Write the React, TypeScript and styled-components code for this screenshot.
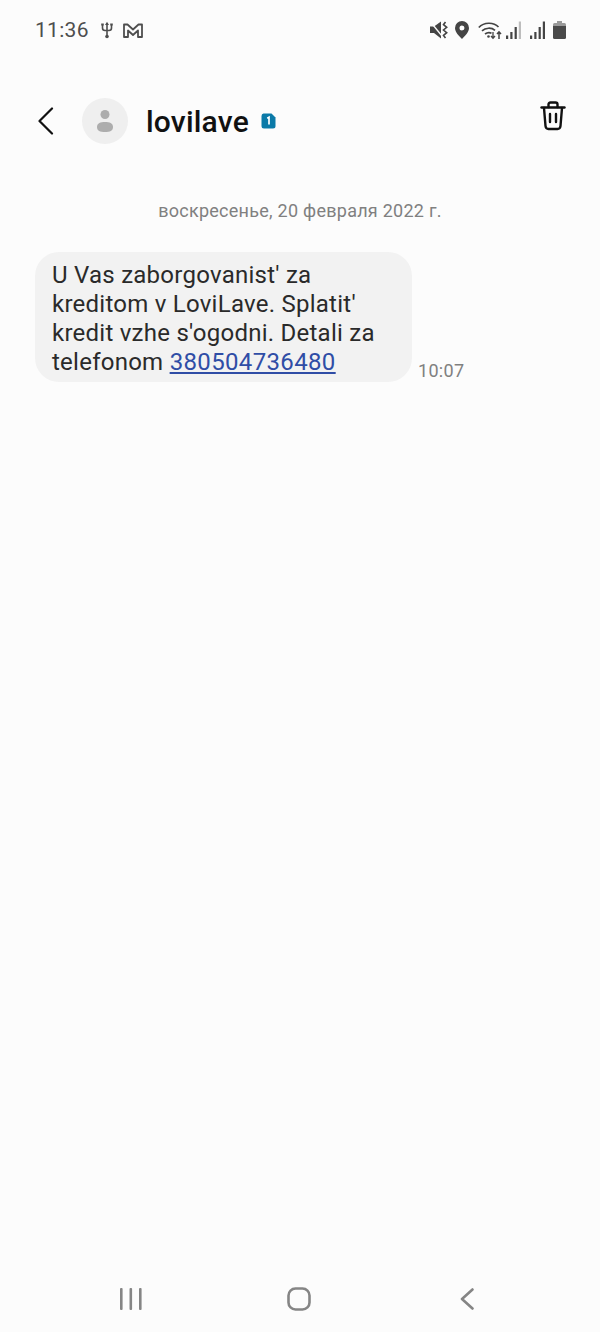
import React from 'react';
import styled, { createGlobalStyle } from 'styled-components';

const GlobalStyle = createGlobalStyle`
  html, body {
    margin: 0;
    padding: 0;
    background: #fcfcfc;
  }
  * {
    box-sizing: border-box;
  }
`;

const Screen = styled.div`
  width: 600px;
  height: 1332px;
  display: flex;
  flex-direction: column;
  background: #fcfcfc;
  font-family: Roboto, "Noto Sans", sans-serif;
  overflow: hidden;
`;

const StatusBar = styled.div`
  height: 60px;
  padding: 0 34px 0 35px;
  display: flex;
  align-items: center;
  justify-content: space-between;
  color: #4e4e4e;
`;

const StatusGroup = styled.div`
  display: flex;
  align-items: center;
`;

const StatusItem = styled.span<{ $left: number }>`
  display: flex;
  margin-left: ${(p) => p.$left}px;
`;

const Clock = styled.span`
  font-size: 21px;
  letter-spacing: 0.3px;
`;

const Header = styled.header`
  height: 80px;
  margin-top: 21px;
  padding: 0 36px;
  display: flex;
  align-items: center;
`;

const BackButton = styled.div`
  width: 46px;
  height: 46px;
  padding-left: 1px;
  display: flex;
  align-items: center;
`;

const Avatar = styled.div`
  width: 46px;
  height: 46px;
  border-radius: 50%;
  background: #efefef;
  display: flex;
  align-items: center;
  justify-content: center;
  margin-right: 18px;
`;

const Name = styled.h1`
  margin: 2px 12px 0 0;
  font-size: 30px;
  font-weight: 500;
  letter-spacing: 0.2px;
  color: #111;
  line-height: 46px;
`;

const TrashButton = styled.div`
  margin-left: auto;
  margin-right: -2px;
  margin-top: -10px;
  display: flex;
`;

const Thread = styled.main`
  flex: 1;
  padding: 0 35px;
  display: flex;
  flex-direction: column;
`;

const DateLabel = styled.div`
  margin-top: 39px;
  text-align: center;
  font-size: 18px;
  line-height: 22px;
  color: #808080;
  letter-spacing: 0.26px;
`;

const MessageRow = styled.div`
  margin-top: 30px;
  display: flex;
  align-items: flex-end;
  gap: 6px;
`;

const Bubble = styled.div`
  width: 377px;
  height: 130px;
  padding: 9px 17px 0;
  border-radius: 24px;
  background: #f2f2f2;
  color: #2a2a2a;
  font-size: 24px;
  line-height: 29px;
  letter-spacing: 0.25px;
`;

const PhoneLink = styled.a`
  color: #2f4da6;
  text-decoration: underline;
  letter-spacing: 0.35px;
`;

const Time = styled.span`
  font-size: 18px;
  line-height: 22px;
  color: #808080;
  letter-spacing: 0.3px;
`;

const NavBar = styled.nav`
  height: 66px;
  padding-right: 2px;
  display: grid;
  grid-template-columns: repeat(3, 168px);
  justify-content: center;
  align-items: center;
  justify-items: center;
`;

const NavSlot = styled.div`
  display: flex;
`;

const UsbIcon = () => (
  <svg width="14" height="18" viewBox="0 0 14 18" fill="none" stroke="#4e4e4e" strokeWidth="1.6">
    <path d="M7 2v13M2.500 4v3q0 2.500 2.500 2.500H9q2.500 0 2.500-2.500V4" />
    <circle cx="7" cy="15.500" r="1.800" fill="#4e4e4e" stroke="none" />
    <path d="M5 4L7 .8 9 4z" fill="#4e4e4e" stroke="none" />
    <path d="M1.200 3.500h2.600M10.200 3.500h2.600" strokeWidth="1.800" />
  </svg>
);

const MailIcon = () => (
  <svg width="20" height="15" viewBox="0 0 20 15" fill="none" stroke="#4e4e4e" strokeWidth="1.800" strokeLinejoin="round">
    <path d="M1 14V1.500h3.500L10 6.500l5.500-5H19V14h-4V7.500L10 12 5 7.500V14H1z" />
  </svg>
);

const MuteIcon = () => (
  <svg width="18" height="18" viewBox="0 0 18 18">
    <path d="M0 5.500h4L11 .5v17l-7-5.500H0z" fill="#444" />
    <path d="M1 1.500l11 13.500" stroke="#fcfcfc" strokeWidth="1.300" />
    <path d="M15.500 1l-2 2.700 3.200 2.600-3.200 2.700 3.200 2.700-3.200 2.700 2 2.600" stroke="#444" strokeWidth="1.600" fill="none" />
  </svg>
);

const PinIcon = () => (
  <svg width="14" height="18" viewBox="0 0 14 18">
    <path
      fillRule="evenodd"
      d="M7 0a7 7 0 0 1 7 7c0 4-4 8-7 11-3-3-7-7-7-11a7 7 0 0 1 7-7zm0 4.500a2.500 2.500 0 1 0 0 5 2.500 2.500 0 0 0 0-5z"
      fill="#444"
    />
  </svg>
);

const WifiIcon = () => (
  <svg width="24" height="19" viewBox="0 0 24 19" fill="none" stroke="#444" strokeWidth="1.700">
    <path d="M.8 6.500C6 1 15.500.8 20.500 6" />
    <path d="M4 9.800c3.500-3.200 9.500-3.500 13-.5" />
    <path d="M7 13c2-1.500 4.500-1.800 6.500-.8" />
    <circle cx="10.500" cy="15.500" r="1.300" fill="#444" stroke="none" />
    <path d="M15 11v6M13 15l2 2.200 2-2.200" strokeWidth="1.300" />
    <path d="M21 18v-7M19 13l2-2.200 2 2.200" strokeWidth="1.500" />
  </svg>
);

const SignalIcon = ({ faded }: { faded: boolean }) => (
  <svg width="15" height="18" viewBox="0 0 15 18">
    <rect x="0" y="14.500" width="2.200" height="3.500" fill="#444" />
    <rect x="4.300" y="11" width="2.200" height="7" fill="#444" />
    <rect x="8.600" y="6" width="2.200" height="12" fill="#444" />
    <rect x="12.800" y="0.500" width="2.200" height="17.500" fill={faded ? '#bdbdbd' : '#444'} />
  </svg>
);

const BatteryIcon = () => (
  <svg width="13" height="18" viewBox="0 0 13 18">
    <path d="M4 0h5v2H4z" fill="#9a9a9a" />
    <path d="M1.500 2h10q1.500 0 1.500 1.500V5H0V3.500Q0 2 1.500 2z" fill="#9a9a9a" />
    <path d="M0 5h13v11.500q0 1.500-1.500 1.500h-10Q0 18 0 16.500z" fill="#4a4a4a" />
  </svg>
);

const BackIcon = () => (
  <svg width="18" height="28" viewBox="0 0 18 28" fill="none" stroke="#111" strokeWidth="2.200" strokeLinecap="round" strokeLinejoin="round">
    <path d="M15 1.500L2.500 14 15 26.500" />
  </svg>
);

const PersonIcon = () => (
  <svg width="16" height="22" viewBox="0 0 16 22" fill="#adadad">
    <circle cx="8" cy="4.500" r="4.500" />
    <path d="M8 12c4.500 0 8 1.200 8 5s-3 5-8 5-8-1.200-8-5 3.500-5 8-5z" />
  </svg>
);

const VerifiedBadge = () => (
  <svg width="15" height="16" viewBox="0 0 15 16">
    <path d="M2.500 0.500H10.500L14.500 4.500V13q0 2.500-2.500 2.500H3Q0.500 15.500 0.500 13V3Q0.500 0.500 2.500 0.500z" fill="#0b7aa8" />
    <path d="M6.200 5.200L8 4.200V11.500" fill="none" stroke="#fff" strokeWidth="1.700" />
  </svg>
);

const TrashIcon = () => (
  <svg width="26" height="30" viewBox="0 0 26 30" fill="none" stroke="#111" strokeWidth="2.400" strokeLinecap="round" strokeLinejoin="round">
    <path d="M1.500 6.500h23" />
    <path d="M8.500 6V3.500q0-2 2-2h5q2 0 2 2V6" />
    <path d="M4 7l1.500 18q.3 3 3 3h9q2.700 0 3-3L22 7" />
    <path d="M10 13v8M16 13v8" />
  </svg>
);

const RecentsIcon = () => (
  <svg width="24" height="22" viewBox="0 0 24 22" fill="#858585">
    <rect x="1" y="0" width="2.600" height="22" rx="1" />
    <rect x="10.500" y="0" width="2.600" height="22" rx="1" />
    <rect x="20" y="0" width="2.600" height="22" rx="1" />
  </svg>
);

const HomeIcon = () => (
  <svg width="24" height="24" viewBox="0 0 24 24" fill="none" stroke="#858585" strokeWidth="2.600">
    <rect x="1.500" y="1.500" width="21" height="21" rx="7" />
  </svg>
);

const NavBackIcon = () => (
  <svg width="14" height="22" viewBox="0 0 14 22" fill="none" stroke="#858585" strokeWidth="2.600" strokeLinecap="round" strokeLinejoin="round">
    <path d="M12.500 1.500L2 11l10.500 9.500" />
  </svg>
);

const App = () => (
  <Screen>
    <GlobalStyle />
    <StatusBar>
      <StatusGroup>
        <Clock>11:36</Clock>
        <StatusItem $left={11}>
          <UsbIcon />
        </StatusItem>
        <StatusItem $left={9}>
          <MailIcon />
        </StatusItem>
      </StatusGroup>
      <StatusGroup>
        <MuteIcon />
        <StatusItem $left={7}>
          <PinIcon />
        </StatusItem>
        <StatusItem $left={9}>
          <WifiIcon />
        </StatusItem>
        <StatusItem $left={4}>
          <SignalIcon faded />
        </StatusItem>
        <StatusItem $left={9}>
          <SignalIcon faded={false} />
        </StatusItem>
        <StatusItem $left={8}>
          <BatteryIcon />
        </StatusItem>
      </StatusGroup>
    </StatusBar>
    <Header>
      <BackButton>
        <BackIcon />
      </BackButton>
      <Avatar>
        <PersonIcon />
      </Avatar>
      <Name>lovilave</Name>
      <VerifiedBadge />
      <TrashButton>
        <TrashIcon />
      </TrashButton>
    </Header>
    <Thread>
      <DateLabel>воскресенье, 20 февраля 2022 г.</DateLabel>
      <MessageRow>
        <Bubble>
          U Vas zaborgovanist' za
          <br />
          kreditom v LoviLave. Splatit'
          <br />
          kredit vzhe s'ogodni. Detali za
          <br />
          telefonom <PhoneLink href="#">380504736480</PhoneLink>
        </Bubble>
        <Time>10:07</Time>
      </MessageRow>
    </Thread>
    <NavBar>
      <NavSlot>
        <RecentsIcon />
      </NavSlot>
      <NavSlot>
        <HomeIcon />
      </NavSlot>
      <NavSlot>
        <NavBackIcon />
      </NavSlot>
    </NavBar>
  </Screen>
);

export default App;
